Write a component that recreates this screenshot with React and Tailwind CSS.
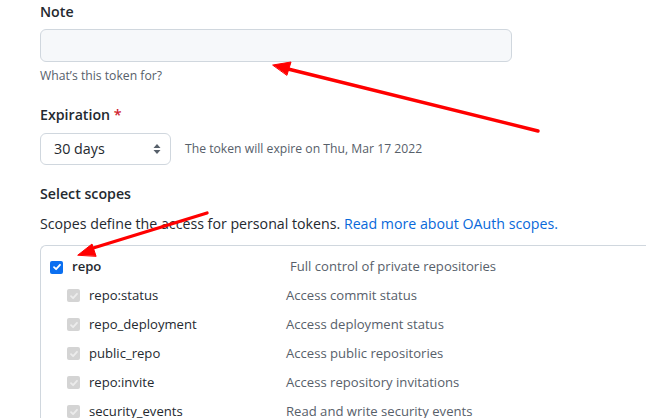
const font = { fontFamily: '"Open Sans", "Noto Sans", sans-serif' };

const scopes = [
  ["repo:status", "Access commit status"],
  ["repo_deployment", "Access deployment status"],
  ["public_repo", "Access public repositories"],
  ["repo:invite", "Access repository invitations"],
  ["security_events", "Read and write security events"],
];

const Check = ({ disabled }) => (
  <span
    className={
      "flex h-[13px] w-[13px] shrink-0 items-center justify-center rounded-[2px] " +
      (disabled ? "bg-[#d4d4d4]" : "bg-[#0b6ff0]")
    }
  >
    <svg width="10" height="10" viewBox="0 0 10 10">
      <path
        d="M2 5.2 L4.1 7.2 L8 2.8"
        fill="none"
        stroke={disabled ? "#ececec" : "#ffffff"}
        strokeWidth="1.8"
        strokeLinecap="round"
        strokeLinejoin="round"
      />
    </svg>
  </span>
);

const Arrows = () => (
  <svg className="pointer-events-none absolute left-0 top-0" width="646" height="418">
    <g fill="#ff0000" stroke="#ff0000" strokeLinecap="round">
      <line x1="538" y1="131" x2="284" y2="68" strokeWidth="3.4" />
      <polygon points="273,65 291,62 287,75" strokeWidth="1" strokeLinejoin="round" />
      <line x1="207" y1="213" x2="90" y2="249" strokeWidth="3.4" />
      <polygon points="78,255 92,244 96,256" strokeWidth="1" strokeLinejoin="round" />
    </g>
  </svg>
);

export default function App() {
  return (
    <div className="relative h-[418px] w-[646px] overflow-hidden bg-white pl-[40px] text-[#24292f]" style={font}>
      <div className="pt-[2px] text-[14.2px] font-semibold leading-[20px]">Note</div>
      <div className="mt-[7px] h-[33px] w-[472px] rounded-[6px] border border-[#d0d7de] bg-[#f6f8fa]" />
      <div className="mt-[5px] text-[12.2px] leading-[18px] text-[#57606a]">What’s this token for?</div>

      <div className="mt-[20px] text-[14.2px] font-semibold leading-[20px]">
        Expiration <span className="text-[#cf222e]">*</span>
      </div>
      <div className="mt-[8px] flex items-center">
        <div className="flex h-[32px] w-[131px] items-center justify-between rounded-[6px] border border-[#d0d7de] bg-white pl-[13px] pr-[9px] text-[14.3px]">
          <span>30 days</span>
          <svg width="8" height="12" viewBox="0 0 8 12">
            <path d="M4 1 L7.5 5 L0.5 5 Z M4 11 L7.5 7 L0.5 7 Z" fill="#57606a" />
          </svg>
        </div>
        <span className="ml-[14px] text-[12.2px] text-[#57606a]">The token will expire on Thu, Mar 17 2022</span>
      </div>

      <div className="mt-[19px] text-[14.2px] font-semibold leading-[20px]">Select scopes</div>
      <div className="mt-[10px] text-[14.2px] leading-[20px]">
        Scopes define the access for personal tokens.{" "}
        <span className="text-[#0969da]">Read more about OAuth scopes.</span>
      </div>

      <div className="mt-[11px] w-[640px] rounded-tl-[6px] border-l border-t border-[#d0d7de] pt-[7px] text-[13.1px]">
        <div className="flex h-[28px] items-center pl-[9px]">
          <Check />
          <span className="ml-[9px] w-[218px] font-semibold">repo</span>
          <span className="text-[#57606a]">Full control of private repositories</span>
        </div>
        {scopes.map(([name, desc]) => (
          <div key={name} className="flex h-[29px] items-center pl-[26px]">
            <Check disabled />
            <span className="ml-[9px] w-[197px]">{name}</span>
            <span className="text-[#57606a]">{desc}</span>
          </div>
        ))}
      </div>

      <Arrows />
    </div>
  );
}
